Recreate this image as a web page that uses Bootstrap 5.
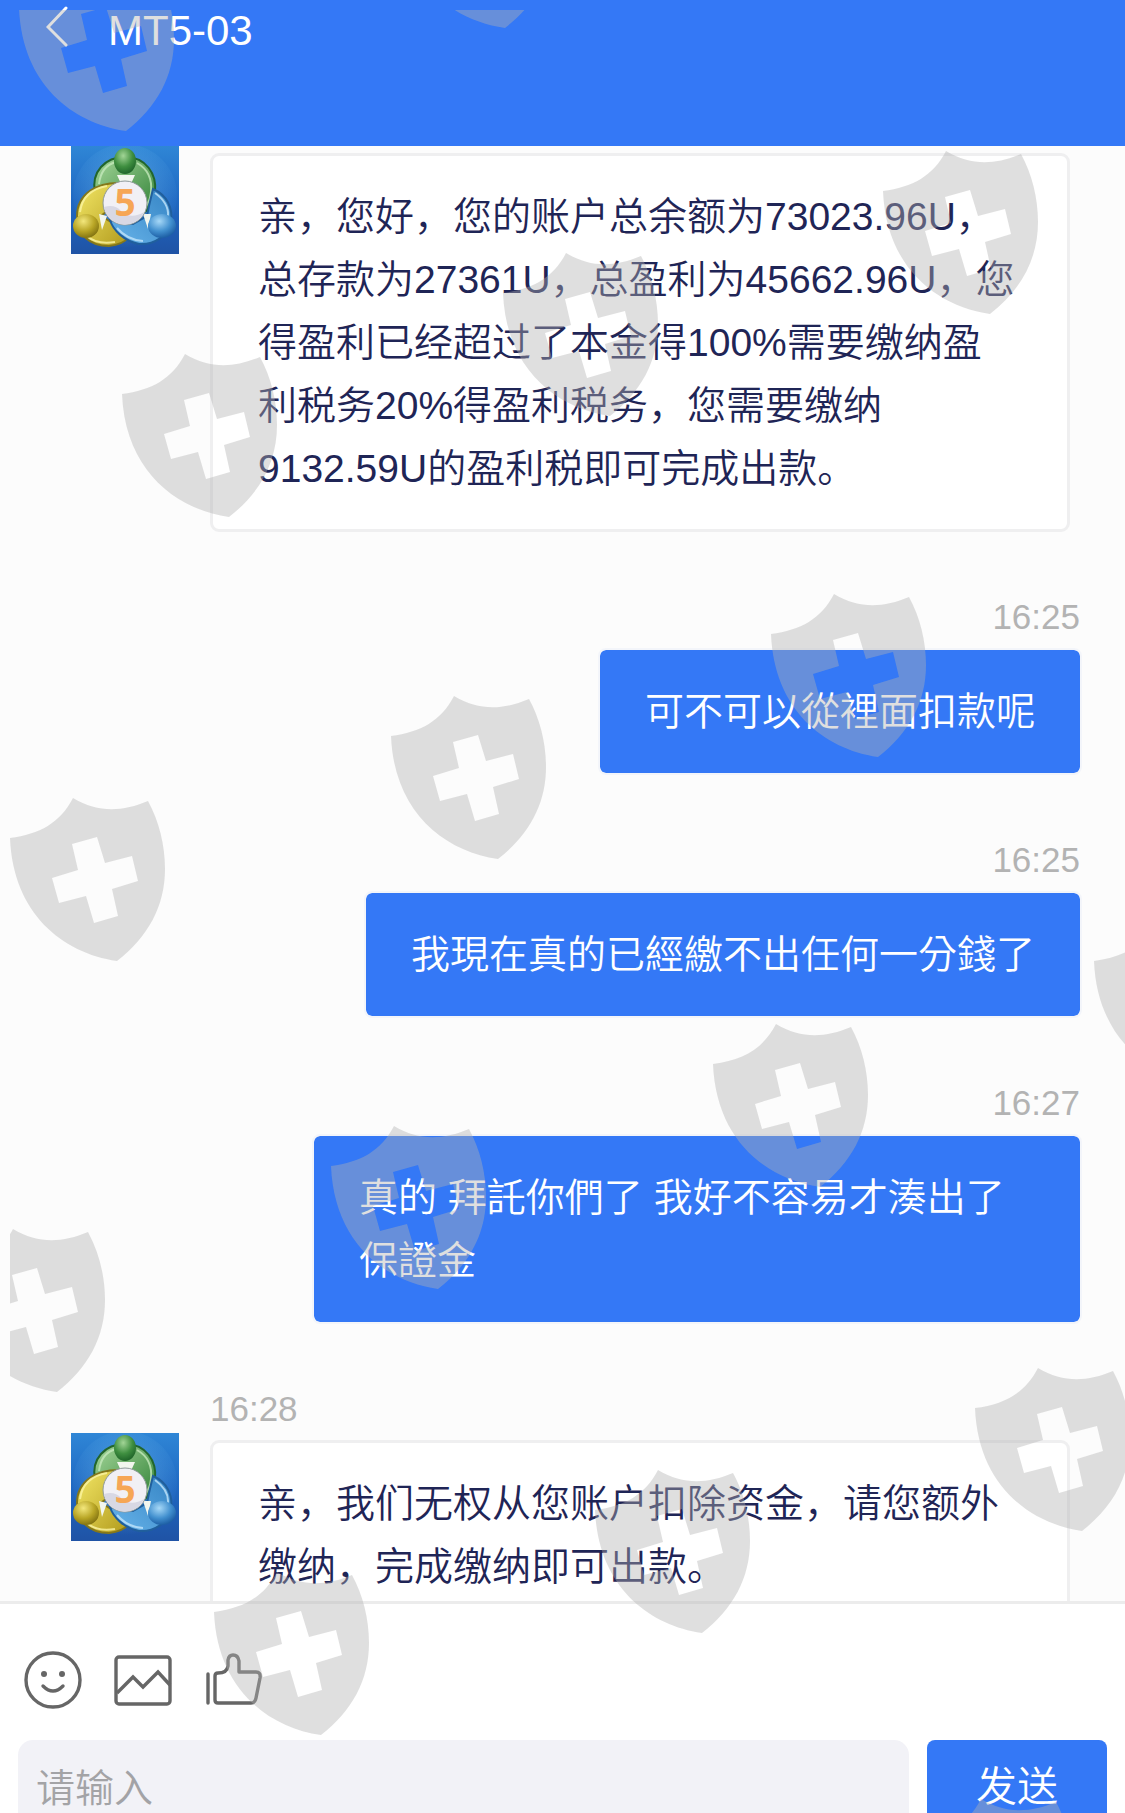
<!DOCTYPE html>
<html lang="zh">
<head>
<meta charset="utf-8">
<meta name="viewport" content="width=device-width, initial-scale=1">
<title>MT5-03</title>
<link href="https://cdn.jsdelivr.net/npm/bootstrap@5.3.0/dist/css/bootstrap.min.css" rel="stylesheet">
<style>
  :root { --brand: #3478f6; --ink: #1f2556; --soft: #efeff0; }
  body { font-family: "Liberation Sans", "Noto Sans CJK SC", sans-serif; overflow: hidden; background: #fff; }
  .chat-app { height: calc(100vh + 40px); }
  .top-bar { height: 146px; background: var(--brand); padding: 5px 0 0 46px; gap: 40px; }
  .top-bar h1 { font-size: 42px; line-height: 52px; font-weight: 400; }
  .back-link { height: 44px; }
  .thread { background: #fcfcfc; padding: 0 43px 0 71px; min-height: 0; }
  .msg { margin-bottom: 65px; }
  .stamp { font-size: 35px; line-height: 40px; color: #b3b3b3; }
  .msg-in { margin-right: 12px; }
  .msg-in .stamp { margin: 0 0 4px 139px; }
  .msg-in .avatar { margin-right: 31px; }
  .bubble { font-size: 39px; line-height: 63px; font-weight: 350; }
  .bubble-in { margin-top: 7px; padding: 29px 46px 29px 45px; border: 3px solid var(--soft); border-radius: 9px; background: #fff; color: var(--ink); }
  .msg-out .stamp { margin: 0 2px 11px 0; }
  .bubble-out { max-width: 770px; padding: 30px 45px; border: 2px solid #f3f5fa; border-radius: 8px; background: var(--brand); background-clip: padding-box; color: #fff; font-family: "Liberation Sans", "Noto Sans CJK TC", sans-serif; }
  .composer { border-top: 3px solid #ececec; padding: 46px 18px 17px; }
  .tools { gap: 27px; padding-left: 3px; height: 60px; margin-bottom: 30px; }
  .tool-btn { width: 63px; height: 60px; }
  .entry { gap: 18px; }
  .msg-input, .msg-input:focus { height: 96px; padding: 2px 18px 0; border: 0; border-radius: 15px; background: #f2f2f7; font-size: 39px; font-weight: 350; box-shadow: none; }
  .msg-input::placeholder { color: #a3a3a6; }
  .send-btn { width: 180px; height: 96px; border: 0; border-radius: 8px; background: var(--brand); color: #fff; font-size: 41px; font-weight: 350; }
  .stamps-layer { top: 10px; left: 10px; right: 0; bottom: 0; overflow: hidden; pointer-events: none; }
</style>
<script src="https://cdn.jsdelivr.net/npm/bootstrap@5.3.0/dist/js/bootstrap.bundle.min.js"></script>
</head>
<body>
<svg width="0" height="0" class="position-absolute" aria-hidden="true">
  <defs>
    <linearGradient id="gSky" x1="0" y1="0" x2="0" y2="1"><stop offset="0" stop-color="#2f86d6"/><stop offset=".5" stop-color="#1f68c2"/><stop offset="1" stop-color="#1f53a5"/></linearGradient>
    <radialGradient id="gLight" cx=".5" cy=".45" r=".55"><stop offset="0" stop-color="#7cc4f2" stop-opacity=".5"/><stop offset="1" stop-color="#7cc4f2" stop-opacity="0"/></radialGradient>
    <linearGradient id="gGreen" x1="0" y1="0" x2="1" y2="1"><stop offset="0" stop-color="#a5d79a"/><stop offset="1" stop-color="#2f8035"/></linearGradient>
    <linearGradient id="gYellow" x1="0" y1="0" x2="1" y2="1"><stop offset="0" stop-color="#f3e766"/><stop offset="1" stop-color="#b19a1c"/></linearGradient>
    <linearGradient id="gBlue" x1="1" y1="0" x2="0" y2="1"><stop offset="0" stop-color="#3584c4"/><stop offset="1" stop-color="#68b4ea"/></linearGradient>
    <radialGradient id="hGreen" cx=".42" cy=".3" r=".7"><stop offset="0" stop-color="#a2d596"/><stop offset=".6" stop-color="#3f8f40"/><stop offset="1" stop-color="#20662a"/></radialGradient>
    <radialGradient id="hYellow" cx=".4" cy=".3" r=".7"><stop offset="0" stop-color="#f3e77c"/><stop offset=".6" stop-color="#b9a626"/><stop offset="1" stop-color="#857512"/></radialGradient>
    <radialGradient id="hBlue" cx=".4" cy=".3" r=".7"><stop offset="0" stop-color="#a6d8f7"/><stop offset=".6" stop-color="#4290cf"/><stop offset="1" stop-color="#1e60a6"/></radialGradient>
    <symbol id="mt5" viewBox="0 0 108 108">
      <rect width="108" height="108" fill="url(#gSky)"/>
      <circle cx="54" cy="50" r="52" fill="url(#gLight)"/>
      <path d="M24 46C20 26 34 11 54 11C75 11 86 28 84 46C82 58 77 65 70 68L64 42Q54 33 46 42L36 46Z" fill="url(#gGreen)" stroke="#22662c" stroke-width="2"/>
      <path d="M28 38Q30 20 45 16M66 17Q82 26 80 46Q79 56 74 61" fill="none" stroke="#c4e8bb" stroke-width="2" opacity=".8"/>
      <path d="M50 37C26 36 6 48 6 70C6 88 18 100 38 100C48 99 54 96 58 91L40 76L30 70L40 62Z" fill="url(#gYellow)" stroke="#84771a" stroke-width="2"/>
      <path d="M9 66Q12 44 36 40M16 90Q26 99 44 96" fill="none" stroke="#fbf5a4" stroke-width="2" opacity=".8"/>
      <path d="M82 43C96 49 102 62 100 76C96 90 84 99 68 98C53 95 42 84 39 74L62 78L76 70L78 60Z" fill="url(#gBlue)" stroke="#205f9d" stroke-width="2"/>
      <path d="M84 47Q98 57 97 70M46 82Q56 94 72 95" fill="none" stroke="#c2e5fb" stroke-width="2" opacity=".8"/>
      <path d="M46 29H64L59 40H51ZM28 68L36 70L31 84ZM72 68H80L77 83Z" fill="#f2f6ee"/>
      <ellipse cx="54" cy="15" rx="11" ry="13" fill="url(#hGreen)"/>
      <ellipse cx="15" cy="80" rx="13" ry="12" fill="url(#hYellow)"/>
      <ellipse cx="91" cy="80" rx="14" ry="12" fill="url(#hBlue)"/>
      <circle cx="54" cy="57" r="22" fill="#f1f0f5" stroke="#8f9a9a" stroke-width="1"/>
      <path d="M33 61Q44 58 50 65Q60 74 73 66A21 21 0 0 1 33 61Z" fill="#d8d8e4"/>
      <text x="54" y="70" text-anchor="middle" font-family="Noto Sans, sans-serif" font-weight="700" font-size="37" fill="#f6a655">5</text>
    </symbol>
    <symbol id="shield" viewBox="0 0 155 164" overflow="visible">
      <path fill-rule="evenodd" d="M0 40C30 36 50 25 63 0C88 15 112 14 138 3C149 23 155 47 155 71C155 108 138 139 107 163C52 155 3 115 0 40ZM62 46L87 39L95 65L122 58L128 83L102 91L108 118L84 125L76 98L49 105L42 80L68 72Z"/>
    </symbol>
  </defs>
</svg>

<div class="chat-app d-flex flex-column position-relative">
  <header class="top-bar d-flex align-items-start flex-shrink-0">
    <a href="#" class="back-link d-block" aria-label="返回">
      <svg class="d-block" width="22" height="42" viewBox="0 0 22 42" fill="none" stroke="#fff" stroke-width="3" stroke-linecap="round"><path d="M20 3L2 22L20 40"/></svg>
    </a>
    <h1 class="text-white m-0">MT5-03</h1>
  </header>

  <main class="thread flex-grow-1 overflow-hidden">
    <article class="msg msg-in">
      <div class="d-flex align-items-start">
        <svg class="avatar flex-shrink-0" width="108" height="108" role="img" aria-label="MT5"><use href="#mt5"/></svg>
        <div class="bubble bubble-in flex-grow-1">亲，您好，您的账户总余额为73023.96U，总存款为27361U，总盈利为45662.96U，您得盈利已经超过了本金得100%需要缴纳盈<br>利税务20%得盈利税务，您需要缴纳9132.59U的盈利税即可完成出款。</div>
      </div>
    </article>

    <article class="msg msg-out d-flex flex-column align-items-end" lang="zh-Hant">
      <time class="stamp">16:25</time>
      <div class="bubble bubble-out">可不可以從裡面扣款呢</div>
    </article>
    <article class="msg msg-out d-flex flex-column align-items-end" lang="zh-Hant">
      <time class="stamp">16:25</time>
      <div class="bubble bubble-out">我現在真的已經繳不出任何一分錢了</div>
    </article>
    <article class="msg msg-out d-flex flex-column align-items-end" lang="zh-Hant">
      <time class="stamp">16:27</time>
      <div class="bubble bubble-out">真的 拜託你們了 我好不容易才湊出了保證金</div>
    </article>

    <article class="msg msg-in">
      <time class="stamp d-block">16:28</time>
      <div class="d-flex align-items-start">
        <svg class="avatar flex-shrink-0" width="108" height="108" role="img" aria-label="MT5"><use href="#mt5"/></svg>
        <div class="bubble bubble-in flex-grow-1">亲，我们无权从您账户扣除资金，请您额外缴纳，完成缴纳即可出款。</div>
      </div>
    </article>
  </main>

  <form class="composer bg-white flex-shrink-0">
    <div class="tools d-flex align-items-center">
      <button type="button" class="tool-btn btn p-0 border-0" aria-label="表情">
        <svg class="d-block mx-auto" width="60" height="60" viewBox="0 0 60 60" fill="none" stroke="#666" stroke-width="3.4" stroke-linecap="round"><circle cx="30" cy="30" r="27"/><path d="M20 36Q30 46 40 36"/><circle cx="21" cy="24" r="3" fill="#666" stroke="none"/><circle cx="39" cy="24" r="3" fill="#666" stroke="none"/></svg>
      </button>
      <button type="button" class="tool-btn btn p-0 border-0" aria-label="图片">
        <svg class="d-block mx-auto" width="60" height="60" viewBox="0 0 60 60" fill="none" stroke="#666" stroke-width="3.4"><rect x="3" y="7" width="54" height="47" rx="3"/><path d="M4 43L20 27L30 37L45 22L57 35"/></svg>
      </button>
      <button type="button" class="tool-btn btn p-0 border-0" aria-label="赞">
        <svg class="d-block mx-auto" width="60" height="60" viewBox="0 0 60 60" fill="none" stroke="#666" stroke-width="3.4" stroke-linecap="round" stroke-linejoin="round"><path d="M5 24V53M12 26Q12 23 15 23Q24 23 25 16V10Q26 5 30 5Q35 5 36 11V22H53Q58 22 57 28L53 48Q52 53 48 53H15Q12 53 12 50Z"/></svg>
      </button>
    </div>
    <div class="entry d-flex">
      <input type="text" class="msg-input form-control flex-grow-1" placeholder="请输入" aria-label="请输入">
      <button type="button" class="send-btn btn flex-shrink-0 p-0">发送</button>
    </div>
  </form>

  <div class="stamps-layer position-absolute" aria-hidden="true">
    <svg class="d-block" width="1125" height="1843" viewBox="10 10 1125 1843" fill="#b1b1b1" fill-opacity=".41">
      <use href="#shield" width="155" height="164" x="19" y="-32"/>
      <use href="#shield" width="155" height="164" x="398" y="-135"/>
      <use href="#shield" width="155" height="164" x="883" y="151"/>
      <use href="#shield" width="155" height="164" x="503" y="253"/>
      <use href="#shield" width="155" height="164" x="122" y="354"/>
      <use href="#shield" width="155" height="164" x="771" y="594"/>
      <use href="#shield" width="155" height="164" x="391" y="696"/>
      <use href="#shield" width="155" height="164" x="10" y="798"/>
      <use href="#shield" width="155" height="164" x="1094" y="921"/>
      <use href="#shield" width="155" height="164" x="713" y="1024"/>
      <use href="#shield" width="155" height="164" x="331" y="1126"/>
      <use href="#shield" width="155" height="164" x="-50" y="1229"/>
      <use href="#shield" width="155" height="164" x="975" y="1368"/>
      <use href="#shield" width="155" height="164" x="595" y="1470"/>
      <use href="#shield" width="155" height="164" x="214" y="1572"/>
      <use href="#shield" width="155" height="164" x="918" y="1799"/>
    </svg>
  </div>
</div>
</body>
</html>
